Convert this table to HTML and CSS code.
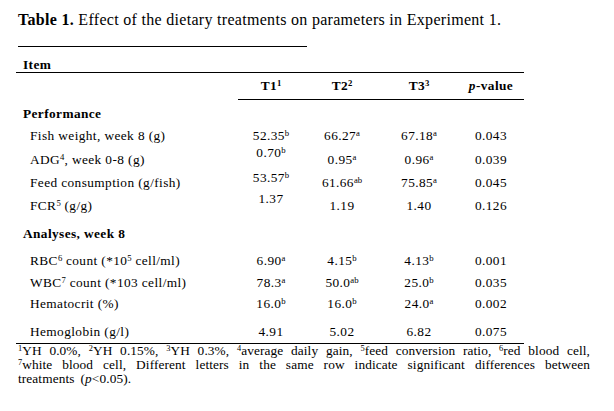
FILE: index.html
```html
<!DOCTYPE html>
<html>
<head>
<meta charset="utf-8">
<link rel="stylesheet" href="styles.css">
</head>
<body>
<div class="page">
  <p class="title"><b>Table 1.</b> Effect of the dietary treatments on parameters in Experiment 1.</p>
  <div class="title-rule"></div>
  <div class="table">
    <div class="item-row">Item</div>
    <div class="row head-row">
      <div class="c"></div>
      <div class="c h">T1<sup>1</sup></div>
      <div class="c h">T2<sup>2</sup></div>
      <div class="c h">T3<sup>3</sup></div>
      <div class="c h"><i>p</i>-value</div>
    </div>
    <div class="body">
      <div class="row h22"><div class="c sec">Performance</div></div>
      <div class="row h24">
        <div class="c lab">Fish weight, week 8 (g)</div>
        <div class="c">52.35<sup>b</sup></div>
        <div class="c">66.27<sup>a</sup></div>
        <div class="c">67.18<sup>a</sup></div>
        <div class="c">0.043</div>
      </div>
      <div class="row h23">
        <div class="c lab">ADG<sup>4</sup>, week 0-8 (g)</div>
        <div class="c up7">0.70<sup>b</sup></div>
        <div class="c">0.95<sup>a</sup></div>
        <div class="c">0.96<sup>a</sup></div>
        <div class="c">0.039</div>
      </div>
      <div class="row h23">
        <div class="c lab">Feed consumption (g/fish)</div>
        <div class="c up5">53.57<sup>b</sup></div>
        <div class="c">61.66<sup>ab</sup></div>
        <div class="c">75.85<sup>a</sup></div>
        <div class="c">0.045</div>
      </div>
      <div class="row h28">
        <div class="c lab">FCR<sup>5</sup> (g/g)</div>
        <div class="c up7">1.37</div>
        <div class="c">1.19</div>
        <div class="c">1.40</div>
        <div class="c">0.126</div>
      </div>
      <div class="row h27"><div class="c sec">Analyses, week 8</div></div>
      <div class="row h22">
        <div class="c lab">RBC<sup>6</sup> count (*10<sup>5</sup> cell/ml)</div>
        <div class="c">6.90<sup>a</sup></div>
        <div class="c">4.15<sup>b</sup></div>
        <div class="c">4.13<sup>b</sup></div>
        <div class="c">0.001</div>
      </div>
      <div class="row h21">
        <div class="c lab">WBC<sup>7</sup> count (*103 cell/ml)</div>
        <div class="c">78.3<sup>a</sup></div>
        <div class="c">50.0<sup>ab</sup></div>
        <div class="c">25.0<sup>b</sup></div>
        <div class="c">0.035</div>
      </div>
      <div class="row h28">
        <div class="c lab">Hematocrit (%)</div>
        <div class="c">16.0<sup>b</sup></div>
        <div class="c">16.0<sup>b</sup></div>
        <div class="c">24.0<sup>a</sup></div>
        <div class="c">0.002</div>
      </div>
      <div class="row h19 last">
        <div class="c lab">Hemoglobin (g/l)</div>
        <div class="c">4.91</div>
        <div class="c">5.02</div>
        <div class="c">6.82</div>
        <div class="c">0.075</div>
      </div>
    </div>
  </div>
  <p class="notes"><sup>1</sup>YH 0.0%, <sup>2</sup>YH 0.15%, <sup>3</sup>YH 0.3%, <sup>4</sup>average daily gain, <sup>5</sup>feed conversion ratio, <sup>6</sup>red blood cell, <sup>7</sup>white blood cell, Different letters in the same row indicate significant differences between treatments (<i>p</i>&lt;0.05).</p>
</div>
</body>
</html>
```

FILE: styles.css
```css
html, body {
  margin: 0;
  padding: 0;
  background: #fff;
}

body {
  font-family: "Liberation Serif", "Times New Roman", serif;
  color: #000;
}

.page {
  padding-top: 11px;
}

.title {
  margin: 0 0 0 18px;
  font-size: 16px;
  letter-spacing: 0.3px;
  line-height: 18px;
  height: 18px;
  white-space: nowrap;
}

.title-rule {
  margin: 17px 0 0 18px;
  width: 289px;
  height: 1px;
  background: #000;
}

.table {
  margin-left: 16px;
  width: 508px;
  font-size: 13.33px;
  letter-spacing: 0.4px;
}

.item-row {
  padding: 11px 0 0 7px;
  line-height: 14px;
  font-weight: bold;
  border-bottom: 1px solid #000;
}

.row {
  display: grid;
  grid-template-columns: 222px 66px 76px 78px 66px;
  align-items: start;
  line-height: 16px;
}

.c {
  text-align: center;
  white-space: nowrap;
}

.head-row .h {
  font-weight: bold;
  padding: 5px 0 5px;
  border-bottom: 1px solid #000;
}

.body {
  padding-top: 6px;
}

.sec {
  text-align: left;
  padding-left: 7px;
  font-weight: bold;
  grid-column: 1 / -1;
}

.lab {
  text-align: left;
  padding-left: 14px;
}

.h19 { height: 19px; }
.h21 { height: 21px; }
.h22 { height: 22px; }
.h23 { height: 23px; }
.h24 { height: 24px; }
.h27 { height: 27px; }
.h28 { height: 28px; }

.up5 { margin-top: -5px; }
.up7 { margin-top: -7px; }

.last {
  border-bottom: 1px solid #000;
}

sup {
  font-size: 8.7px;
  line-height: 0;
  letter-spacing: 0;
  vertical-align: 4.5px;
}

.notes {
  margin: 0 0 0 18px;
  width: 572px;
  font-size: 13.33px;
  letter-spacing: 0.1px;
  word-spacing: 2.6px;
  line-height: 14px;
  text-align: justify;
}

.notes sup {
  font-size: 8.4px;
  vertical-align: 4px;
}
```
